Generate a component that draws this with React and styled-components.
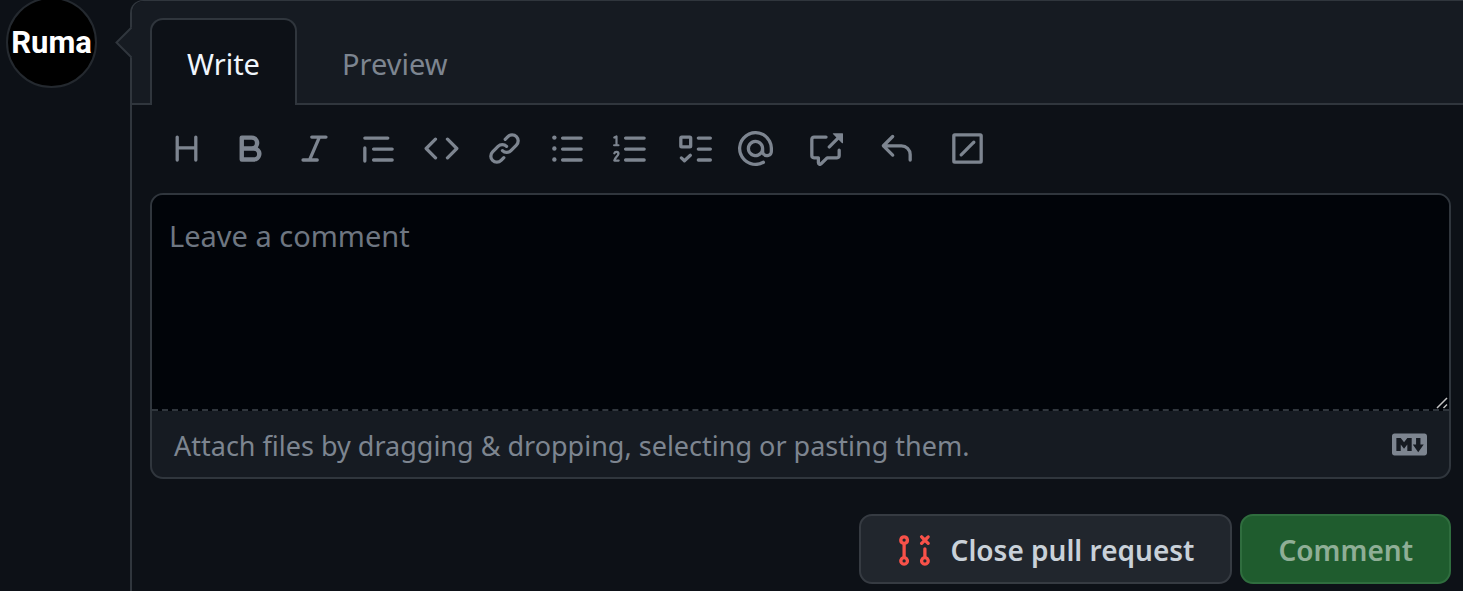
import React from "react";
import styled, { createGlobalStyle } from "styled-components";

const GlobalStyle = createGlobalStyle`
  *, *::before, *::after { box-sizing: border-box; }
  body {
    margin: 0;
    background: #0d1117;
    color: #e6edf3;
    font-family: "Noto Sans", "Open Sans", sans-serif;
    font-size: 29px;
    line-height: 40px;
  }
  button, textarea { font: inherit; }
`;

const Page = styled.main`
  display: flex;
  align-items: stretch;
  gap: 33px;
  min-height: 100vh;
  padding-left: 6px;
  overflow: hidden;
`;

const Avatar = styled.a`
  display: flex;
  flex: none;
  align-items: center;
  justify-content: center;
  width: 91px;
  height: 91px;
  margin-top: -3px;
  border: 2px solid #24292f;
  border-radius: 50%;
  background: #000;
  color: #fff;
  font-family: Roboto, sans-serif;
  font-size: 31px;
  font-weight: 700;
  text-decoration: none;
`;

const CommentBox = styled.form`
  position: relative;
  flex: 1;
  min-width: 0;
  border-top: 1px solid #30363d;
  border-left: 2px solid #30363d;
  border-top-left-radius: 13px;
`;

const Caret = styled.svg`
  position: absolute;
  top: 25px;
  left: -17px;
  width: 17px;
  height: 32px;
`;

const TabBar = styled.div`
  display: flex;
  padding: 17px 18px 0;
  border-bottom: 2px solid #30363d;
  border-top-left-radius: 12px;
  background: #161b22;
`;

const Tab = styled.button`
  height: 87px;
  margin-bottom: -2px;
  padding: 2px ${(p) => (p.$active ? 35 : 43)}px 0;
  border: 2px solid ${(p) => (p.$active ? "#30363d" : "transparent")};
  border-bottom: 0;
  border-radius: 13px 13px 0 0;
  background: ${(p) => (p.$active ? "#0d1117" : "transparent")};
  color: ${(p) => (p.$active ? "#f0f6fc" : "#7d8590")};
`;

const Body = styled.div`
  padding: 0 12px 7px 18px;
`;

const Toolbar = styled.div`
  display: flex;
  padding: 26px 19px 27px;
`;

const ToolGroup = styled.div`
  display: flex;
  gap: ${(p) => p.$gap}px;
  margin-right: ${(p) => p.$after || 0}px;
`;

const ToolButton = styled.button`
  display: flex;
  padding: 0;
  border: 0;
  background: none;
  color: #7d8590;
`;

const Glyph = styled.svg`
  display: block;
  flex: none;
  width: 35px;
  height: 35px;
  fill: currentColor;
`;

const Editor = styled.div`
  overflow: hidden;
  border: 2px solid #30363d;
  border-radius: 13px;
  background: #161b22;
`;

const InputArea = styled.div`
  position: relative;
  display: flex;
`;

const TextInput = styled.textarea`
  display: block;
  width: 100%;
  height: 216px;
  padding: 21px 17px;
  border: 0;
  border-bottom: 2px dashed #30363d;
  outline: 0;
  resize: none;
  background: #010409;
  color: #e6edf3;
  &::placeholder { color: #6e7681; opacity: 1; }
`;

const Grip = styled.svg`
  position: absolute;
  right: 1px;
  bottom: 2px;
  width: 12px;
  height: 12px;
`;

const AttachBar = styled.div`
  display: flex;
  align-items: center;
  justify-content: space-between;
  height: 66px;
  padding: 0 22px;
  color: #7d8590;
  font-size: 27px;
`;

const AttachLabel = styled.label`
  padding-top: 4px;
`;

const MarkdownLink = styled.a`
  color: #7d8590;
`;

const Actions = styled.div`
  display: flex;
  justify-content: flex-end;
  gap: 8px;
  padding-top: 35px;
`;

const ActionButton = styled.button`
  display: flex;
  align-items: center;
  justify-content: center;
  gap: 19px;
  height: 70px;
  padding: 2px 36px 0;
  border: 2px solid ${(p) => (p.$primary ? "#2f6d3e" : "#363b42")};
  border-radius: 13px;
  background: ${(p) => (p.$primary ? "#1f5c2e" : "#21262d")};
  color: ${(p) => (p.$primary ? "#8fae96" : "#c9d1d9")};
  font-size: 28px;
  font-weight: 600;
  white-space: nowrap;
`;

const ClosedIcon = styled(Glyph)`
  color: #f85149;
`;

const stroke = {
  fill: "none",
  stroke: "currentColor",
  strokeWidth: 1.5,
  strokeLinecap: "round",
  strokeLinejoin: "round",
};

const groups = [
  {
    gap: 29,
    after: 28,
    tools: [
      ["Heading", <path d="M3.75 2a.75.75 0 01.75.75V7h7V2.75a.75.75 0 011.5 0v10.5a.75.75 0 01-1.5 0V8.5h-7v4.75a.75.75 0 01-1.5 0V2.75A.75.75 0 013.75 2z" />],
      ["Bold", <path fillRule="evenodd" d="M4 2a1 1 0 00-1 1v10a1 1 0 001 1h5.5a3.5 3.5 0 001.852-6.47A3.5 3.5 0 008.5 2H4zm4.5 5a1.5 1.5 0 100-3H5v3h3.5zM5 9v3h4.5a1.5 1.5 0 000-3H5z" />],
      ["Italic", <path d="M6 2.75A.75.75 0 016.75 2h6.5a.75.75 0 010 1.5h-2.505l-3.858 9H9.25a.75.75 0 010 1.5h-6.5a.75.75 0 010-1.5h2.505l3.858-9H6.75A.75.75 0 016 2.75z" />],
      ["Quote", <path d="M1.75 3.25h10.5M5.75 8.25h8.5M5.75 13.25h8.5M1.75 7.75v6" {...stroke} />],
    ],
  },
  {
    gap: 28,
    after: 29,
    tools: [
      ["Code", <path d="M4.72 3.22a.75.75 0 011.06 1.06L2.06 8l3.72 3.72a.75.75 0 11-1.06 1.06L.47 8.53a.75.75 0 010-1.06l4.25-4.25zm6.56 0a.75.75 0 10-1.06 1.06L13.94 8l-3.72 3.72a.75.75 0 101.06 1.06l4.25-4.25a.75.75 0 000-1.06l-4.25-4.25z" />],
      ["Link", <path d="M7.775 3.275a.75.75 0 001.06 1.06l1.25-1.25a2 2 0 112.83 2.83l-2.5 2.5a2 2 0 01-2.83 0 .75.75 0 00-1.06 1.06 3.5 3.5 0 004.95 0l2.5-2.5a3.5 3.5 0 00-4.95-4.95l-1.25 1.25zm-4.69 9.64a2 2 0 010-2.83l2.5-2.5a2 2 0 012.83 0 .75.75 0 001.06-1.06 3.5 3.5 0 00-4.95 0l-2.5 2.5a3.5 3.5 0 004.95 4.95l1.25-1.25a.75.75 0 00-1.06-1.06l-1.25 1.25a2 2 0 01-2.83 0z" />],
      ["Bulleted list", <g><circle cx="2" cy="3" r="1" /><circle cx="2" cy="8" r="1" /><circle cx="2" cy="13" r="1" /><path d="M5.75 3.25h8.5M5.75 8.25h8.5M5.75 13.25h8.5" {...stroke} /></g>],
      ["Numbered list", <g {...stroke}><path d="M5.75 3.25h8.5M5.75 8.25h8.5M5.75 13.25h8.5" /><path strokeWidth="1" d="M.6 3l1-.5v4M.5 6.5h2M.6 10.2c.3-1 2-.9 1.9.3C2.4 11.4.9 12.1.6 13.5h2" /></g>],
    ],
  },
  {
    gap: 26,
    after: 35,
    tools: [
      ["Task list", <g {...stroke}><rect x="1.75" y="2.75" width="4.5" height="4.5" rx=".4" /><path d="M9.75 3.25h5.5M9.75 8.25h5.5M9.75 13.25h5.5" /><path d="M2 12.3l1.4 1.3 2.7-2.5" /></g>],
      ["Mention", <path fillRule="evenodd" d="M4.75 2.37a6.5 6.5 0 006.5 11.26.75.75 0 01.75 1.298 8 8 0 113.994-7.273.754.754 0 01.006.095v1.5a2.75 2.75 0 01-5.072 1.475A4 4 0 1112 8v1.25a1.25 1.25 0 002.5 0V7.867a6.5 6.5 0 00-9.75-5.496V2.37zM10.5 8a2.5 2.5 0 10-5 0 2.5 2.5 0 005 0z" />],
    ],
  },
  {
    gap: 36,
    tools: [
      ["Reference", <path d="M16 1.25v4.146a.25.25 0 01-.427.177L14.03 4.03l-3.75 3.75a.75.75 0 11-1.06-1.06l3.75-3.75-1.543-1.543A.25.25 0 0111.604 1h4.146a.25.25 0 01.25.25zM2.75 3.5a.25.25 0 00-.25.25v7.5c0 .138.112.25.25.25h2a.75.75 0 01.75.75v2.19l2.72-2.72a.75.75 0 01.53-.22h4.5a.25.25 0 00.25-.25v-2.5a.75.75 0 111.5 0v2.5A1.75 1.75 0 0113.25 13H9.06l-2.573 2.573A1.457 1.457 0 014 14.543V13H2.75A1.75 1.75 0 011 11.25v-7.5C1 2.784 1.784 2 2.75 2h5.5a.75.75 0 010 1.5h-5.5z" />],
      ["Saved replies", <path d="M6.78 1.97a.75.75 0 010 1.06L3.81 6h6.44A4.75 4.75 0 0115 10.75v2.5a.75.75 0 01-1.5 0v-2.5a3.25 3.25 0 00-3.25-3.25H3.81l2.97 2.97a.75.75 0 11-1.06 1.06L1.47 7.28a.75.75 0 010-1.06l4.25-4.25a.75.75 0 011.06 0z" />],
      ["Slash commands", <g {...stroke}><rect x="1.75" y="1.75" width="12.5" height="12.5" rx=".4" /><path d="M5.1 10.9l5.8-5.8" /></g>],
    ],
  },
];

export default function App() {
  return (
    <>
      <GlobalStyle />
      <Page>
        <Avatar href="#profile">Ruma</Avatar>
        <CommentBox onSubmit={(e) => e.preventDefault()}>
          <Caret viewBox="0 0 17 32" aria-hidden="true">
            <path d="M17 1L1.500 16.500L17 32z" fill="#161b22" />
            <path d="M16.500 1.500L1.500 16.500L16.500 31.500" fill="none" stroke="#30363d" strokeWidth="2" />
          </Caret>
          <TabBar role="tablist">
            <Tab type="button" role="tab" aria-selected="true" $active>Write</Tab>
            <Tab type="button" role="tab" aria-selected="false">Preview</Tab>
          </TabBar>
          <Body>
            <Toolbar role="toolbar" aria-label="Formatting">
              {groups.map((group, i) => (
                <ToolGroup key={i} $gap={group.gap} $after={group.after}>
                  {group.tools.map(([name, shape]) => (
                    <ToolButton key={name} type="button" aria-label={name}>
                      <Glyph viewBox="0 0 16 16" aria-hidden="true">{shape}</Glyph>
                    </ToolButton>
                  ))}
                </ToolGroup>
              ))}
            </Toolbar>
            <Editor>
              <InputArea>
                <TextInput id="comment" placeholder="Leave a comment" aria-label="Comment body" />
                <Grip viewBox="0 0 12 12" aria-hidden="true">
                  <path d="M1 11L11 1M7.500 11L11 7.500" fill="none" stroke="#c4c4c4" strokeWidth="1.500" />
                </Grip>
              </InputArea>
              <AttachBar>
                <AttachLabel htmlFor="comment">
                  Attach files by dragging &amp; dropping, selecting or pasting them.
                </AttachLabel>
                <MarkdownLink href="#markdown" aria-label="Styling with Markdown is supported">
                  <Glyph viewBox="0 0 16 16" aria-hidden="true">
                    <path fillRule="evenodd" d="M14.85 3H1.15C.52 3 0 3.52 0 4.15v7.69C0 12.48.52 13 1.15 13h13.69c.64 0 1.15-.52 1.15-1.15v-7.7C16 3.52 15.48 3 14.85 3zM9 11H7V8L5.5 9.92 4 8v3H2V5h2l1.500 2L7 5h2v6zm2.990.500L9.500 8H11V5h2v3h1.500l-2.510 3.500z" />
                  </Glyph>
                </MarkdownLink>
              </AttachBar>
            </Editor>
            <Actions>
              <ActionButton type="button">
                <ClosedIcon viewBox="0 0 16 16" aria-hidden="true">
                  <path fillRule="evenodd" d="M3.25 1A2.25 2.25 0 0 1 4 5.372v5.256a2.251 2.251 0 1 1-1.5 0V5.372A2.251 2.251 0 0 1 3.25 1Zm9.5 5.5a.75.75 0 0 1 .75.75v3.378a2.251 2.251 0 1 1-1.5 0V7.25a.75.75 0 0 1 .75-.75Zm-2.03-5.273a.75.75 0 0 1 1.06 0l.97.97.97-.97a.748.748 0 0 1 1.265.332.75.75 0 0 1-.205.729l-.97.97.97.97a.751.751 0 0 1-.018 1.042.751.751 0 0 1-1.042.018l-.97-.97-.97.97a.749.749 0 0 1-1.275-.326.749.749 0 0 1 .215-.734l.97-.97-.97-.97a.75.75 0 0 1 0-1.06ZM2.5 3.25a.75.75 0 1 0 1.5 0 .75.75 0 0 0-1.5 0ZM3.25 12a.75.75 0 1 0 0 1.5.75.75 0 0 0 0-1.5Zm9.5 0a.75.75 0 1 0 0 1.5.75.75 0 0 0 0-1.5Z" />
                </ClosedIcon>
                Close pull request
              </ActionButton>
              <ActionButton type="submit" $primary>Comment</ActionButton>
            </Actions>
          </Body>
        </CommentBox>
      </Page>
    </>
  );
}
